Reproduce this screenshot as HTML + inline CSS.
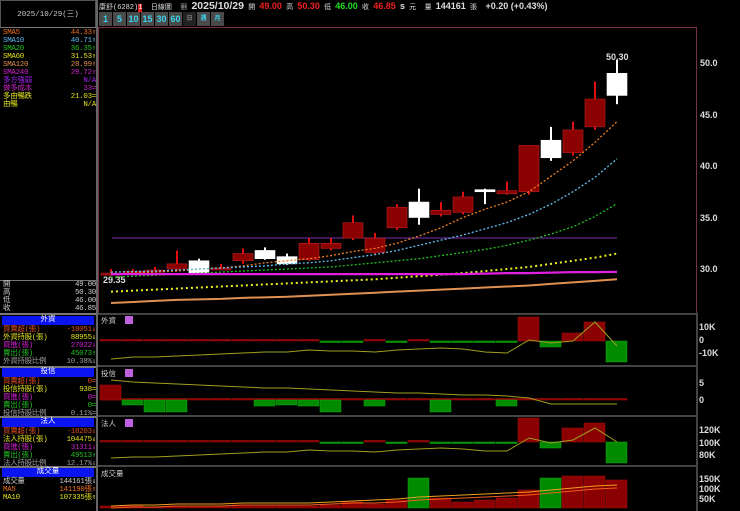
<!DOCTYPE html>
<html><head><meta charset="utf-8"><style>
body{margin:0;width:740px;height:511px;background:#000;overflow:hidden;font-family:"Liberation Mono","Noto Sans CJK TC",monospace;position:relative}
.a{position:absolute;white-space:nowrap}
.row{position:absolute;left:3px;width:93px;font-size:7.5px;height:8px;line-height:8px;letter-spacing:-0.3px}
.row span{position:absolute;right:0}
.hd{position:absolute;left:2px;width:92px;height:9px;background:#0a14f0;color:#fff;font-size:7.5px;text-align:center;line-height:9px}
.btn{position:absolute;top:12px;height:14px;background:#4a4a4a;color:#3ad3f0;font:bold 9px "Liberation Sans",sans-serif;text-align:center;line-height:14px}
.n{font:bold 9px "Liberation Sans",sans-serif}
</style></head><body>
<div class="a" style="left:0;top:0;width:96px;height:28px;border:1px solid #555;box-sizing:border-box;color:#ccc;font-size:7.5px;line-height:28px;text-align:center">2025/10/29(三)</div>
<div class="a" style="left:96px;top:0;width:2px;height:511px;background:#666"></div>
<div class="a" style="left:0;top:27px;width:96px;height:1px;background:#777"></div>
<div class="row" style="top:29px;color:#f07020">SMA5<span>44.33⇑</span></div>
<div class="row" style="top:37px;color:#60b8f0">SMA10<span>40.71⇑</span></div>
<div class="row" style="top:45px;color:#20c020">SMA20<span>36.35⇑</span></div>
<div class="row" style="top:53px;color:#e0e020">SMA60<span>31.53⇑</span></div>
<div class="row" style="top:61px;color:#e09050">SMA120<span>28.99⇑</span></div>
<div class="row" style="top:69px;color:#d020d0">SMA240<span>29.72⇑</span></div>
<div class="row" style="top:77px;color:#a020f0">多方強弱<span>N/A</span></div>
<div class="row" style="top:85px;color:#c020c0">做多成本<span>33=</span></div>
<div class="row" style="top:93px;color:#e0e020">多由暢跌<span>21.03=</span></div>
<div class="row" style="top:101px;color:#e0e020">由暢<span>N/A</span></div>
<div class="a" style="left:0;top:280px;width:96px;height:1px;background:#777"></div>
<div class="row" style="top:281px;color:#ccc">開<span>49.00</span></div>
<div class="row" style="top:289px;color:#ccc">高<span>50.30</span></div>
<div class="row" style="top:297px;color:#ccc">低<span>46.00</span></div>
<div class="row" style="top:305px;color:#ccc">收<span>46.85</span></div>
<div class="a" style="left:0;top:313px;width:96px;height:2px;background:#777"></div>
<div class="hd" style="top:316px">外資</div>
<div class="row" style="top:326px;color:#e05020">買賣超(張)<span>-18051⇓</span></div>
<div class="row" style="top:334px;color:#e0e020">外資持股(張)<span>88955⇓</span></div>
<div class="row" style="top:342px;color:#d020d0">買進(張)<span>27022⇓</span></div>
<div class="row" style="top:350px;color:#20c020">賣出(張)<span>45073⇑</span></div>
<div class="row" style="top:358px;color:#999">外資持股比例<span>10.38%⇓</span></div>
<div class="a" style="left:0;top:366px;width:96px;height:2px;background:#777"></div>
<div class="hd" style="top:368px">投信</div>
<div class="row" style="top:378px;color:#e05020">買賣超(張)<span>0=</span></div>
<div class="row" style="top:386px;color:#e0e020">投信持股(張)<span>938=</span></div>
<div class="row" style="top:394px;color:#d020d0">買進(張)<span>0=</span></div>
<div class="row" style="top:402px;color:#20c020">賣出(張)<span>0=</span></div>
<div class="row" style="top:410px;color:#999">投信持股比例<span>0.11%=</span></div>
<div class="a" style="left:0;top:416px;width:96px;height:2px;background:#777"></div>
<div class="hd" style="top:418px">法人</div>
<div class="row" style="top:428px;color:#e05020">買賣超(張)<span>-18203⇓</span></div>
<div class="row" style="top:436px;color:#e0e020">法人持股(張)<span>104475⇓</span></div>
<div class="row" style="top:444px;color:#d020d0">買進(張)<span>31311⇓</span></div>
<div class="row" style="top:452px;color:#20c020">賣出(張)<span>49513⇑</span></div>
<div class="row" style="top:460px;color:#999">法人持股比例<span>12.17%⇓</span></div>
<div class="a" style="left:0;top:466px;width:96px;height:2px;background:#777"></div>
<div class="hd" style="top:468px">成交量</div>
<div class="row" style="top:478px;color:#ccc">成交量<span>144161張⇓</span></div>
<div class="row" style="top:486px;color:#f07020">MA5<span>141190張⇑</span></div>
<div class="row" style="top:494px;color:#e0e020">MA10<span>107335張⇑</span></div>

<div class="a" style="left:99px;top:0;font-size:7px;color:#ddd;line-height:12px">康舒(6282)<span style="background:#e02020;color:#fff">1</span>&nbsp; 日線圖 &nbsp;▦ <b style="font:bold 10.5px 'Liberation Sans',sans-serif">2025/10/29</b> 開 <b class="n" style="color:#f02020">49.00</b> 高 <b class="n" style="color:#f02020">50.30</b> 低 <b class="n" style="color:#20e020">46.00</b> 收 <b class="n" style="color:#f02020">46.85</b> <b class="n">s</b> 元 &nbsp;量 <b class="n">144161</b> 張 &nbsp;<b class="n">+0.20 (+0.43%)</b></div>
<div class="btn" style="left:99px;width:13px">1</div>
<div class="btn" style="left:113px;width:13px">5</div>
<div class="btn" style="left:127px;width:13px">10</div>
<div class="btn" style="left:141px;width:13px">15</div>
<div class="btn" style="left:155px;width:13px">30</div>
<div class="btn" style="left:169px;width:13px">60</div>
<div class="btn" style="left:183px;width:13px;background:#222;color:#888;font-size:6px">日</div>
<div class="btn" style="left:197px;width:13px;font-size:6px">週</div>
<div class="btn" style="left:211px;width:13px;font-size:6px">月</div>

<svg class="a" style="left:0;top:0" width="740" height="511" id="s">
<rect x="98.5" y="27.5" width="598" height="286" fill="none" stroke="#7a3040"/>
<g fill="#444"><rect x="98" y="313" width="600" height="2"/><rect x="98" y="365" width="600" height="2"/><rect x="98" y="415" width="600" height="2"/><rect x="98" y="465" width="600" height="2"/><rect x="696" y="313" width="2" height="198"/></g>
<g font-family="Liberation Sans,sans-serif" font-size="9" font-weight="bold" fill="#ddd">
<text x="700" y="66">50.0</text><text x="700" y="118">45.0</text><text x="700" y="169">40.0</text><text x="700" y="221">35.0</text><text x="700" y="272">30.0</text>
<text x="606" y="60">50.30</text><text x="103" y="283">29.35</text>
<text x="699" y="330">10K</text><text x="699" y="343">0</text><text x="699" y="356">-10K</text>
<text x="699" y="386">5</text><text x="699" y="403">0</text>
<text x="699" y="433">120K</text><text x="699" y="446">100K</text><text x="699" y="458">80K</text>
<text x="699" y="482">150K</text><text x="699" y="492">100K</text><text x="699" y="502">50K</text>
</g>
<g font-size="7.5" fill="#ccc" font-family="Noto Sans CJK TC,sans-serif"><text x="101" y="323">外資</text><text x="101" y="376">投信</text><text x="101" y="426">法人</text><text x="101" y="476">成交量</text></g>
<g fill="#c060e0"><rect x="125" y="316" width="8" height="8"/><rect x="125" y="369" width="8" height="8"/><rect x="125" y="419" width="8" height="8"/></g>
<line x1="112" y1="238" x2="617" y2="238" stroke="#8030b0" stroke-width="1"/>
<g id="g"></g>
</svg>
<script>
var g=document.getElementById('g'),h='';
function Y(p){return 63+(50-p)*10.3}
var W=[4,7,8,14,17,20,23],VG=[14,20];
var C=[[29.6,29.6,30,29.35],[29.8,29.8,30,29.6],[29.9,29.9,30.2,29.7],[30,30.5,31.8,29.8],[30.8,29.6,31,29.6],[30.1,30.1,30.5,29.9],[30.8,31.5,32,30.5],[31.8,31,32.1,30.9],[31.2,30.5,31.5,30.4],[30.9,32.5,33,30.8],[32,32.5,33,31.8],[33,34.5,35.2,32.8],[31.6,33,33.5,31.4],[34,36,36.3,33.8],[36.5,35,37.8,34.3],[35.3,35.7,36.5,35.1],[35.5,37,37.5,35.3],[37.7,37.5,37.8,36.3],[37.3,37.6,38.5,37.2],[37.5,42,42,37.2],[42.5,40.8,43.8,40.5],[41.3,43.5,44.3,41],[43.8,46.5,48.2,43.5],[49,46.85,50.3,46]];
function X(i){return 111+22*i}
C.forEach(function(c,i){var x=X(i),col=W.indexOf(i)>=0?'#fff':'#8b0000',wk=col=='#fff'?'#fff':'#e01010';
var t=Y(Math.max(c[0],c[1])),b=Y(Math.min(c[0],c[1]));
h+='<line x1="'+x+'" y1="'+Y(c[2])+'" x2="'+x+'" y2="'+Y(c[3])+'" stroke="'+wk+'" stroke-width="2"/>';
h+='<rect x="'+(x-10)+'" y="'+t+'" width="20" height="'+Math.max(2,b-t)+'" fill="'+col+'" stroke="'+(col=='#fff'?'#fff':'#c02020')+'" stroke-width=".6"/>';});
function line(arr,col,dash,w){var p=arr.map(function(v,i){return X(i)+','+Y(v)}).join(' ');h+='<polyline points="'+p+'" fill="none" stroke="'+col+'" stroke-width="'+(w||1.3)+'" stroke-dasharray="'+(dash||'')+'"/>';}
line([29.5,29.6,29.7,29.8,30,30.1,30.3,30.6,30.8,31,31.3,31.7,32,32.5,33.2,34,35,35.8,36.5,37.5,39,40.5,42.3,44.3],'#f08020','2,2');
line([29.7,29.75,29.8,29.9,30,30.1,30.2,30.3,30.5,30.6,30.8,31.1,31.4,31.8,32.3,32.8,33.3,33.9,34.5,35.3,36.3,37.5,38.9,40.7],'#60c0f0','2,2');
line([29.2,29.3,29.4,29.5,29.6,29.7,29.8,29.9,30,30.1,30.2,30.4,30.6,30.8,31,31.3,31.6,31.9,32.3,32.8,33.4,34.1,35.1,36.35],'#20c020','2,2');
line([27.8,27.9,28,28.1,28.2,28.3,28.4,28.5,28.6,28.7,28.8,28.9,29,29.15,29.3,29.45,29.6,29.8,30,30.2,30.5,30.8,31.1,31.5],'#f0f020','2,3',2);
line([26.7,26.8,26.9,27,27.05,27.1,27.2,27.25,27.3,27.4,27.5,27.6,27.7,27.8,27.9,28,28.1,28.2,28.3,28.4,28.55,28.7,28.85,29],'#e09050','',2);
line([29.5,29.5,29.5,29.5,29.5,29.5,29.5,29.5,29.5,29.5,29.5,29.5,29.5,29.5,29.5,29.5,29.5,29.55,29.6,29.6,29.65,29.7,29.7,29.72],'#e020e0','',2.2);
function bars(z,vals,sc,lc,lv,min,vol){vals.forEach(function(v,i){var x=X(i)-11,hh=v*sc,up=vol?VG.indexOf(i)<0:v>=0,col=up?'#8b0000':'#008a00';if(min&&Math.abs(hh)<1.5)hh=hh>=0?1.5:-1.5;
h+='<rect x="'+x+'" y="'+(hh>=0?z-hh:z)+'" width="21" height="'+Math.abs(hh)+'" fill="'+col+'" stroke="'+(up?'#b01010':'#10b010')+'" stroke-width=".5"/>';});
if(lv)h+='<polyline points="'+lv.map(function(v,i){return X(i)+','+v}).join(' ')+'" fill="none" stroke="'+lc+'" stroke-width="1"/>';}
bars(341,[0,0,1,1,.5,1,1,1,0,1,-1,-1,0,-1,1,-1,-1,-1,-1,24,-6,8,19,-21],1,'#a0a020',[359,357,357,356,355,354,353,352,352,350,351,351,352,350,349,348,349,352,353,340,343,341,322,346],true);
bars(400,[0,0,0,0,0,0,0,0,0,0,0,0,0,0,0,0,0,0,0,0,0,0,0,0],1,'#a0a020',null,true);
(function(){var v=[15,-5,-12,-12,0,0,0,-6,-5,-6,-12,0,-6,0,0,-12,0,0,-6,0,0,0,0,0];v.forEach(function(a,i){if(a){var x=X(i)-11;h+='<rect x="'+x+'" y="'+(a>0?400-a:400)+'" width="21" height="'+Math.abs(a)+'" fill="'+(a>0?'#8b0000':'#008a00')+'" stroke="'+(a>0?'#b01010':'#10b010')+'" stroke-width=".5"/>';}});
h+='<polyline points="'+[380,382,383,384,385,386,387,388,388,389,390,391,392,393,393,394,395,395,396,398,404,404,404,404].map(function(y,i){return X(i)+','+y}).join(' ')+'" fill="none" stroke="#a0a020"/>';})();
bars(442,[0,0,1,1,.5,1,1,1,0,1,-1,-1,0,-1,1,-1,-1,-1,-1,24,-6,14,19,-21],1,'#a0a020',[458,457,457,456,455,454,453,452,452,450,451,451,452,450,449,448,449,451,451,438,443,440,428,442],true);
bars(508,[2,2,1,2,1,2,3,2,2,2,3,6,4,8,30,10,6,8,10,18,30,32,32,28],1,'#f0a020',[506,505,505,504,504,504,503,503,503,503,502,501,500,499,497,496,495,494,493,492,490,488,486,485],false,true);
h+='<polyline points="'+[508,507,507,506,506,506,505,505,505,505,504,503,503,502,500,499,498,497,496,495,493,491,489,488].map(function(y,i){return X(i)+','+y}).join(' ')+'" fill="none" stroke="#f06020"/>';
g.innerHTML=h;
</script>
</body></html>
